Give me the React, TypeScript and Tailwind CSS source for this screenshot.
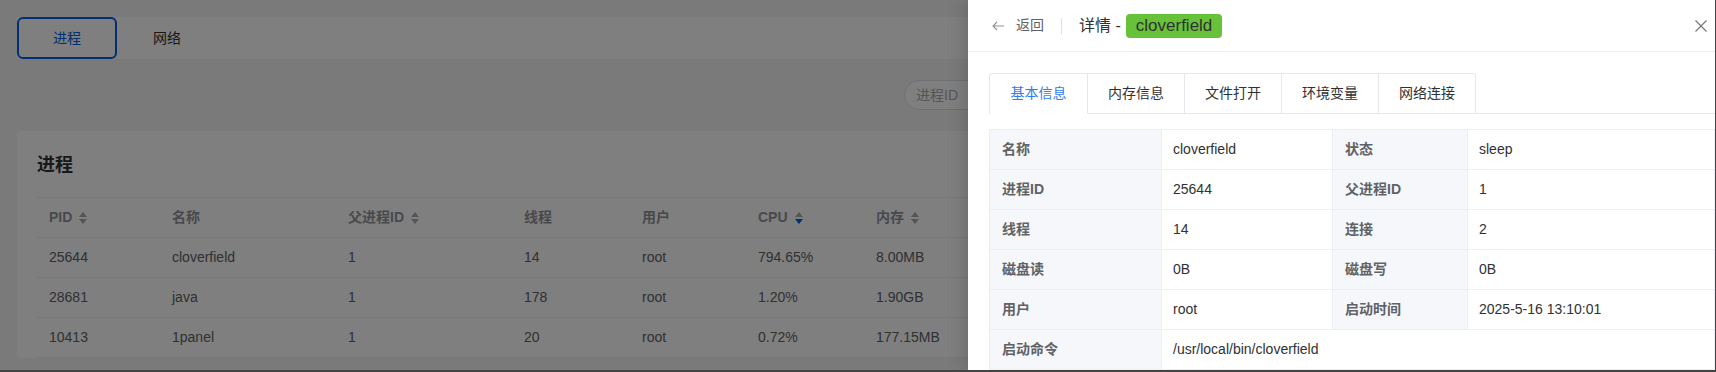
import React from "react";

const rows = [
  ["25644", "cloverfield", "1", "14", "root", "794.65%", "8.00MB"],
  ["28681", "java", "1", "178", "root", "1.20%", "1.90GB"],
  ["10413", "1panel", "1", "20", "root", "0.72%", "177.15MB"],
];

const SortIcon = ({ active }: { active?: boolean }) => (
  <span className="ml-[7px] inline-flex flex-col gap-[2px]">
    <span className="h-0 w-0 border-x-[4.5px] border-b-[5px] border-x-transparent border-b-[#a8abb2]" />
    <span
      className={
        active
          ? "h-0 w-0 border-x-[4.5px] border-t-[5px] border-x-transparent border-t-[#005eeb]"
          : "h-0 w-0 border-x-[4.5px] border-t-[5px] border-x-transparent border-t-[#a8abb2]"
      }
    />
  </span>
);

const Head = ({ children, sort, active }: { children: React.ReactNode; sort?: boolean; active?: boolean }) => (
  <div className="flex h-[40px] items-center border-b border-[#ebeef5] pl-[12px] text-[14px] font-bold text-[#909399]">
    {children}
    {sort && <SortIcon active={active} />}
  </div>
);

const Cell = ({ children }: { children: React.ReactNode }) => (
  <div className="flex h-[40px] items-center border-b border-[#ebeef5] pl-[12px] text-[14px] text-[#606266]">
    {children}
  </div>
);

const Label = ({ children }: { children: React.ReactNode }) => (
  <div className="flex h-[40px] items-center border-r border-b border-[#ebeef5] bg-[#f5f7fa] pl-[12px] text-[14px] font-bold text-[#606266]">
    {children}
  </div>
);

const Value = ({ children, wide }: { children: React.ReactNode; wide?: boolean }) => (
  <div
    className={
      wide
        ? "col-span-3 flex h-[40px] items-center border-r border-b border-[#ebeef5] pl-[11px] text-[14px] text-[#303133]"
        : "flex h-[40px] items-center border-r border-b border-[#ebeef5] pl-[11px] text-[14px] text-[#303133]"
    }
  >
    {children}
  </div>
);

const tabs = ["基本信息", "内存信息", "文件打开", "环境变量", "网络连接"];

export default function App() {
  return (
    <div className="h-[372px] w-[1716px] bg-[#444] font-['Liberation_Sans','Noto_Sans_CJK_SC',sans-serif]">
      <div className="relative h-[370px] w-[1715px] overflow-hidden bg-[#f4f4f5]">
        {/* page behind the drawer */}
        <div className="flex flex-col pt-[17px] pl-[17px] pr-[17px]">
          <div className="flex h-[42px] items-center bg-white">
            <button className="h-[42px] w-[100px] rounded-[6px] border-2 border-[#005eeb] text-[14px] text-[#005eeb]">
              进程
            </button>
            <button className="h-[42px] w-[100px] text-[14px] text-[#303133]">网络</button>
          </div>

          <div className="mt-[21px] flex justify-end">
            <div className="flex h-[30px] w-[794px] items-center rounded-full border border-[#dcdfe6] bg-white pl-[11px] text-[14px] text-[#a8abb2]">
              进程ID
            </div>
          </div>

          <div className="mt-[21px] rounded-[4px] bg-white px-[20px] pt-[20px]">
            <div className="text-[18px] leading-[28px] font-bold text-[#303133]">进程</div>
            <div className="mt-[18px] grid grid-cols-[123px_176px_176px_118px_116px_118px_1fr] border-t border-[#ebeef5]">
              <Head sort>PID</Head>
              <Head>名称</Head>
              <Head sort>父进程ID</Head>
              <Head>线程</Head>
              <Head>用户</Head>
              <Head sort active>CPU</Head>
              <Head sort>内存</Head>
              {rows.map((r) => (
                <React.Fragment key={r[0]}>
                  {r.map((c, i) => (
                    <Cell key={i}>{c}</Cell>
                  ))}
                </React.Fragment>
              ))}
            </div>
          </div>
        </div>

        {/* mask */}
        <div className="absolute inset-0 bg-black/50" />

        {/* drawer */}
        <div className="absolute top-0 right-0 bottom-0 flex w-[747px] flex-col bg-white shadow-[-6px_0_14px_rgba(0,0,0,0.12)]">
          <div className="flex h-[52px] shrink-0 items-center border-b border-[#ebeef5] pl-[24px] pr-[8px]">
            <svg width="12" height="10" viewBox="0 0 12 10" fill="none" stroke="#909399" strokeWidth="1.1">
              <path d="M12 5H1M5 1L1 5L5 9" />
            </svg>
            <span className="ml-[12px] text-[14px] text-[#606266]">返回</span>
            <span className="ml-[17px] h-[16px] w-px bg-[#dcdfe6]" />
            <span className="ml-[17px] text-[16px] text-[#303133]">详情 -</span>
            <span className="ml-[5px] flex h-[24px] items-center rounded-[4px] bg-[#67c23a] px-[10px] text-[17px] text-[#303133]">
              cloverfield
            </span>
            <svg className="ml-auto" width="12" height="12" viewBox="0 0 12 12" stroke="#72767b" strokeWidth="1.2">
              <path d="M0.5 0.5L11.5 11.5M11.5 0.5L0.5 11.5" />
            </svg>
          </div>

          <div className="flex flex-col pt-[21px] pl-[21px]">
            <div className="flex">
              <div className="flex rounded-t-[4px] border-t border-l border-[#e4e7ed]">
                {tabs.map((t, i) => (
                  <div
                    key={t}
                    className={
                      i === 0
                        ? "flex h-[40px] w-[98px] items-center justify-center border-r border-b border-r-[#e4e7ed] border-b-white text-[14px] text-[#2f7bf5]"
                        : "flex h-[40px] w-[97px] items-center justify-center border-r border-b border-[#e4e7ed] text-[14px] text-[#303133]"
                    }
                  >
                    {t}
                  </div>
                ))}
              </div>
              <div className="flex-1 border-b border-[#e4e7ed]" />
            </div>

            <div className="mt-[15px] grid grid-cols-[172px_171px_135px_1fr] border-t border-l border-[#ebeef5]">
              <Label>名称</Label>
              <Value>cloverfield</Value>
              <Label>状态</Label>
              <Value>sleep</Value>
              <Label>进程ID</Label>
              <Value>25644</Value>
              <Label>父进程ID</Label>
              <Value>1</Value>
              <Label>线程</Label>
              <Value>14</Value>
              <Label>连接</Label>
              <Value>2</Value>
              <Label>磁盘读</Label>
              <Value>0B</Value>
              <Label>磁盘写</Label>
              <Value>0B</Value>
              <Label>用户</Label>
              <Value>root</Value>
              <Label>启动时间</Label>
              <Value>2025-5-16 13:10:01</Value>
              <Label>启动命令</Label>
              <Value wide>/usr/local/bin/cloverfield</Value>
            </div>
          </div>
        </div>
      </div>
    </div>
  );
}
